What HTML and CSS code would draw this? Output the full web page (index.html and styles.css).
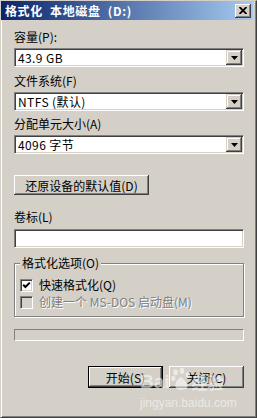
FILE: index.html
```html
<!doctype html>
<html lang="zh-CN">
  <head>
    <meta charset="utf-8" />
    <title>格式化 本地磁盘 (D:)</title>
    <link rel="stylesheet" href="styles.css">
  </head>
  <body>
    <div class="window">
      <div class="titlebar">
        <span class="title">格式化 本地磁盘 (D:)</span>
        <span class="close_btn">
          <svg width="8" height="7" viewBox="0 0 8 7">
            <path d="M0.5 0 L7.5 7 M7.5 0 L0.5 7" stroke="#000" stroke-width="1.8" />
          </svg>
        </span>
      </div>

      <div class="content">
        <div class="label first_label">容量(P):</div>
        <div class="combo">
          <span class="combo_text">43.9 GB</span>
          <span class="combo_btn"><svg width="7" height="4" viewBox="0 0 7 4"><polygon points="0,0 7,0 3.5,4" fill="#000" /></svg></span>
        </div>

        <div class="label fs_label">文件系统(F)</div>
        <div class="combo">
          <span class="combo_text">NTFS (默认)</span>
          <span class="combo_btn"><svg width="7" height="4" viewBox="0 0 7 4"><polygon points="0,0 7,0 3.5,4" fill="#000" /></svg></span>
        </div>

        <div class="label unit_label">分配单元大小(A)</div>
        <div class="combo">
          <span class="combo_text">4096 字节</span>
          <span class="combo_btn"><svg width="7" height="4" viewBox="0 0 7 4"><polygon points="0,0 7,0 3.5,4" fill="#000" /></svg></span>
        </div>

        <div class="btn reset_btn">还原设备的默认值(D)</div>

        <div class="label volume_label">卷标(L)</div>
        <div class="textbox"></div>

        <fieldset class="options">
          <legend>格式化选项(O)</legend>
          <div class="check_row">
            <span class="checkbox">
              <svg width="9" height="9" viewBox="0 0 9 9">
                <polyline points="1.2,3.8 3.4,6 7.8,1.6" fill="none" stroke="#000" stroke-width="2" />
              </svg>
            </span>
            <span>快速格式化(Q)</span>
          </div>
          <div class="check_row disabled">
            <span class="checkbox"></span>
            <span>创建一个 MS-DOS 启动盘(M)</span>
          </div>
        </fieldset>

        <div class="progress"></div>

        <div class="btn_row">
          <div class="btn default_btn">开始(S)</div>
          <div class="btn">关闭(C)</div>
        </div>
      </div>

      <!-- 워터마크 -->
      <div class="watermark">
        <div class="wm_logo">
          <span>Bai</span>
          <svg width="20" height="27" viewBox="0 0 22 26">
            <ellipse cx="5" cy="5" rx="2.6" ry="3.4" />
            <ellipse cx="12" cy="3.5" rx="2.6" ry="3.4" />
            <ellipse cx="18.5" cy="8" rx="2.4" ry="3" />
            <ellipse cx="2.5" cy="12" rx="2.3" ry="3" />
            <path d="M11 10 C6 13 3 19 6 23 C9 26 14 24 17 23 C20 21 17 15 11 10 Z" />
          </svg>
          <span class="wm_cn">经验</span>
        </div>
        <div class="wm_url">jingyan.baidu.com</div>
      </div>
    </div>
  </body>
</html>
```

FILE: styles.css
```css
body {
  margin: 0;
  background: #d4d0c8;
  font-family: "Noto Sans CJK SC", "DejaVu Sans", sans-serif;
  font-size: 12px;
  color: #000;
}

.window {
  position: relative;
  width: 257px;
  height: 418px;
  box-sizing: border-box;
  border-style: solid;
  border-width: 1px;
  border-color: #d4d0c8 #404040 #404040 #d4d0c8;
  box-shadow: inset 1px 0 #fff, inset -1px -1px #808080;
  background: #d4d0c8;
  overflow: hidden;
}

.titlebar {
  display: flex;
  align-items: center;
  justify-content: space-between;
  height: 19px;
  margin-right: 3px;
  padding-left: 4px;
  padding-right: 2px;
  background: linear-gradient(to right, #0a246a, #a6caf0);
}

.title {
  color: #fff;
  font-weight: bold;
  font-size: 12px;
  line-height: 14px;
  letter-spacing: 0.6px;
  word-spacing: 4px;
  white-space: pre;
}

.close_btn {
  display: flex;
  justify-content: center;
  align-items: center;
  width: 16px;
  height: 14px;
  background: #d4d0c8;
  box-shadow: inset -1px -1px #404040, inset 1px 1px #fff, inset -2px -2px #808080;
}

.content {
  padding: 10px 12px 0 13px;
}

.label {
  height: 14px;
  line-height: 14px;
  white-space: pre;
}

.fs_label {
  margin-top: 7px;
}
.unit_label {
  margin-top: 6px;
}
.volume_label {
  margin-top: 15px;
}

.combo,
.textbox {
  display: flex;
  height: 19px;
  margin-top: 4px;
  box-sizing: border-box;
  padding: 1px;
  background: #fff;
  border: 1px solid;
  border-color: #808080 #fff #fff #808080;
  box-shadow: inset 1px 1px #404040, inset -1px -1px #d4d0c8;
}

.textbox {
  margin-top: 5px;
}

.combo_text {
  flex: 1;
  padding-left: 2px;
  line-height: 15px;
  letter-spacing: 0.4px;
  white-space: pre;
}

.combo_btn {
  display: flex;
  justify-content: center;
  align-items: center;
  width: 16px;
  height: 15px;
  background: #d4d0c8;
  box-shadow: inset -1px -1px #404040, inset 1px 1px #d4d0c8, inset -2px -2px #808080, inset 2px 2px #fff;
}

.btn {
  display: flex;
  justify-content: center;
  align-items: center;
  height: 21px;
  box-sizing: border-box;
  background: #d4d0c8;
  box-shadow: inset -1px -1px #404040, inset 1px 1px #fff, inset -2px -2px #808080;
  white-space: pre;
}

.reset_btn {
  width: 135px;
  height: 20px;
  margin-top: 21px;
}

.options {
  margin: 8px 0 0 0;
  padding: 0 0 7px 5px;
  border: 1px solid #808080;
  box-shadow: inset 1px 1px #fff, 1px 1px #fff;
}

.options legend {
  padding: 0 2px;
  line-height: 14px;
  background: #d4d0c8;
}

.check_row {
  display: flex;
  align-items: center;
  gap: 6px;
  height: 14px;
  line-height: 14px;
  margin-top: 8px;
  white-space: pre;
}

.check_row + .check_row {
  margin-top: 3px;
}

.checkbox {
  display: flex;
  justify-content: center;
  align-items: center;
  width: 13px;
  height: 13px;
  box-sizing: border-box;
  background: #fff;
  border: 1px solid;
  border-color: #808080 #fff #fff #808080;
  box-shadow: inset 1px 1px #404040, inset -1px -1px #d4d0c8;
}

.disabled {
  color: #808080;
  text-shadow: 1px 1px #fff;
}

.disabled .checkbox {
  background: #d4d0c8;
}

.progress {
  height: 12px;
  margin-top: 12px;
  box-sizing: border-box;
  border: 1px solid;
  border-color: #808080 #fff #fff #808080;
}

.btn_row {
  display: flex;
  justify-content: flex-end;
  gap: 6px;
  margin-top: 25px;
}

.btn_row .btn {
  width: 75px;
  height: 22px;
}

.default_btn {
  border: 1px solid #000;
}

.watermark {
  position: absolute;
  left: 139px;
  top: 361px;
  color: rgba(255, 255, 255, 0.55);
  fill: rgba(255, 255, 255, 0.55);
  pointer-events: none;
}

.wm_logo {
  display: flex;
  align-items: flex-end;
  height: 31px;
  font-family: "Liberation Sans", sans-serif;
  font-size: 19px;
  font-weight: bold;
  line-height: 22px;
}

.wm_logo svg {
  margin-left: 1px;
}

.wm_cn {
  font-family: "Noto Sans CJK SC", sans-serif;
  font-size: 16px;
  margin-left: 1px;
}

.wm_url {
  margin-top: 3px;
  font-family: "Liberation Sans", sans-serif;
  font-size: 12px;
  line-height: 14px;
}
```
